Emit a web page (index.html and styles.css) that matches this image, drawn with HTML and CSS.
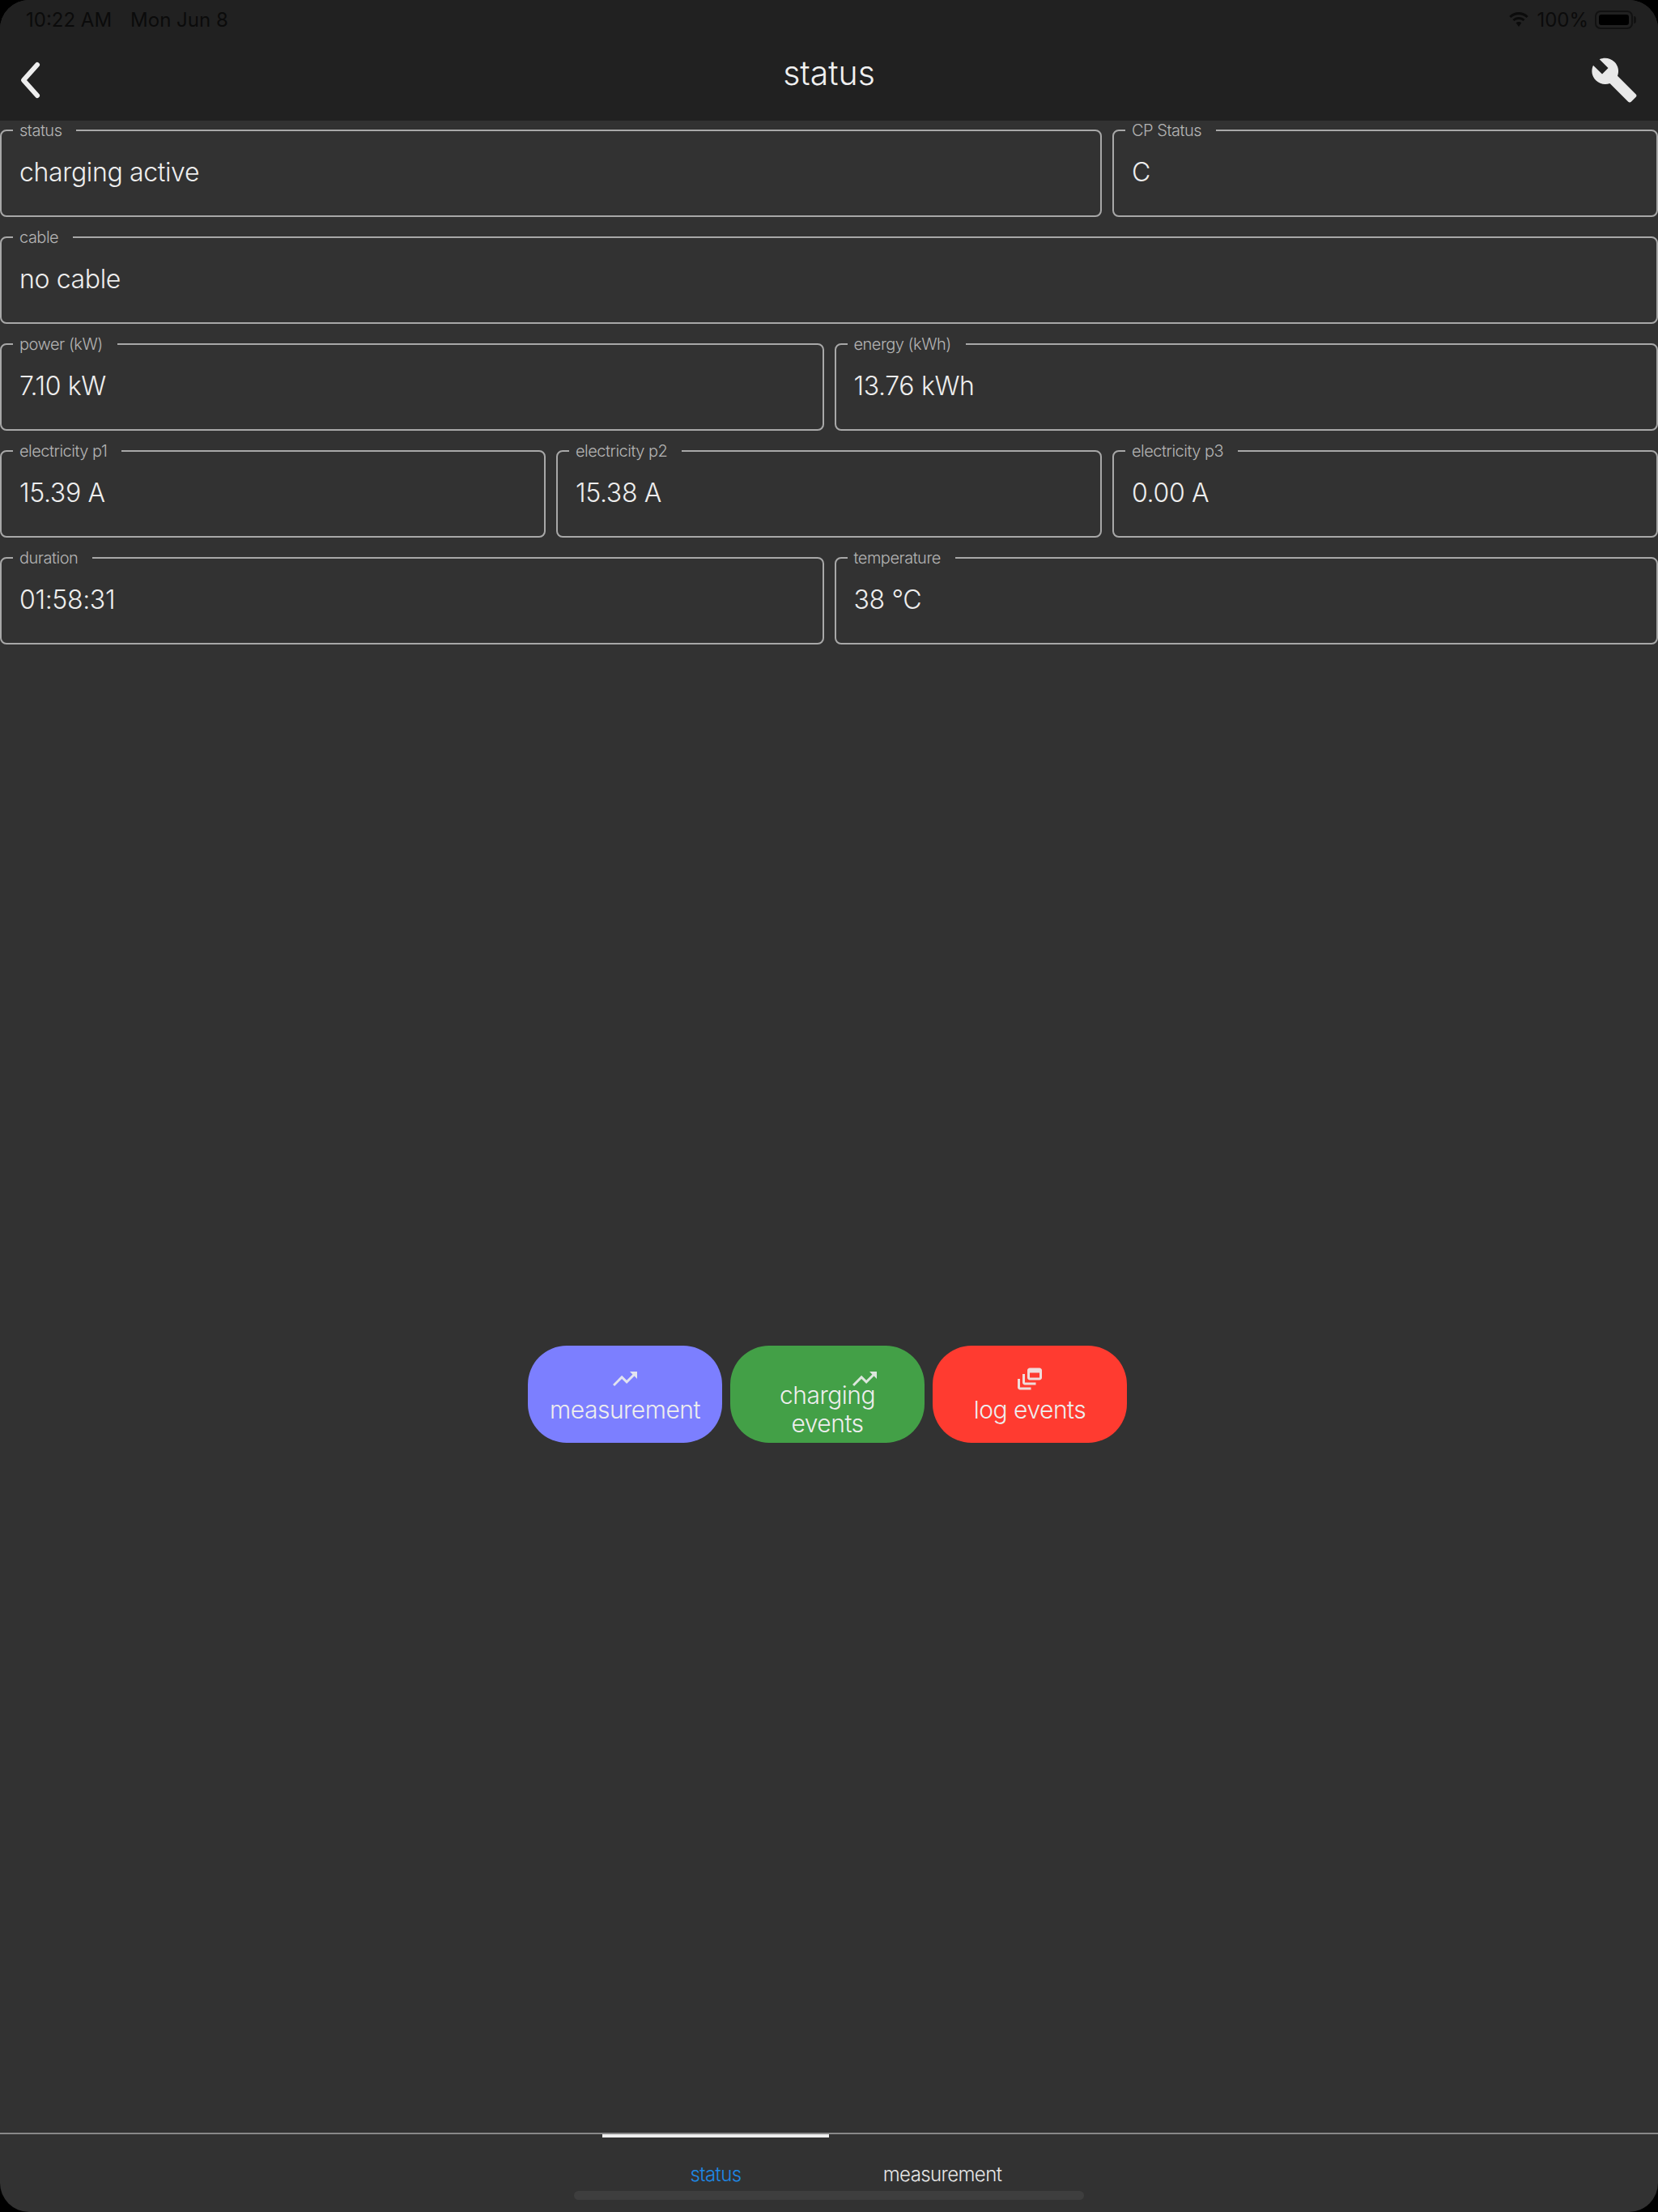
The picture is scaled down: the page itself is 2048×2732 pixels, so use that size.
FILE: index.html
```html
<!DOCTYPE html>
<html lang="en">
<head>
<meta charset="utf-8">
<title>status</title>
<link rel="stylesheet" href="styles.css">
</head>
<body>
<div class="screen">
  <header class="appbar">
    <div class="statusbar">
      <div class="status-left"><span>10:22 AM</span><span>Mon Jun 8</span></div>
      <div class="status-right">
        <svg class="wifi" viewBox="0 0 28 20"><path d="M14 4.200c3.700 0 7.100 1.400 9.700 3.800l2-2.100C22.500 2.900 18.400 1 14 1S5.500 2.900 2.300 5.900l2 2.100C6.900 5.600 10.300 4.200 14 4.200z"/><path d="M14 10c2.100 0 4 .8 5.500 2.100l2-2.100C19.500 8.100 16.900 7 14 7s-5.500 1.100-7.500 3l2 2.100C10 10.800 11.900 10 14 10z"/><path d="M14 13c-1.300 0-2.500.5-3.400 1.300L14 19l3.400-4.700C16.500 13.500 15.300 13 14 13z"/></svg>
        <span>100%</span>
        <span class="battery"><span class="battery-fill"></span></span>
      </div>
    </div>
    <div class="toolbar">
      <svg class="back" viewBox="0 0 30 50"><polyline points="24,6 7,25 24,44"/></svg>
      <h1 class="title">status</h1>
      <svg class="wrench" viewBox="0 0 24 24"><path d="M22.700 19l-9.100-9.100c.9-2.300.4-5-1.500-6.900-2-2-5-2.400-7.400-1.300L9 6 6 9 1.600 4.700C.4 7.100.9 10.100 2.900 12.100c1.900 1.900 4.600 2.400 6.900 1.500l9.100 9.100c.4.4 1 .4 1.400 0l2.300-2.300c.5-.4.5-1.100.1-1.400z"/></svg>
    </div>
  </header>

  <main class="content">
    <div class="fields">
      <fieldset class="field span-4"><legend>status</legend><div class="value">charging active</div></fieldset>
      <fieldset class="field span-2"><legend>CP Status</legend><div class="value">C</div></fieldset>
      <fieldset class="field span-6"><legend>cable</legend><div class="value">no cable</div></fieldset>
      <fieldset class="field span-3"><legend>power (kW)</legend><div class="value">7.10 kW</div></fieldset>
      <fieldset class="field span-3"><legend>energy (kWh)</legend><div class="value">13.76 kWh</div></fieldset>
      <fieldset class="field span-2"><legend>electricity p1</legend><div class="value">15.39 A</div></fieldset>
      <fieldset class="field span-2"><legend>electricity p2</legend><div class="value">15.38 A</div></fieldset>
      <fieldset class="field span-2"><legend>electricity p3</legend><div class="value">0.00 A</div></fieldset>
      <fieldset class="field span-3"><legend>duration</legend><div class="value">01:58:31</div></fieldset>
      <fieldset class="field span-3"><legend>temperature</legend><div class="value">38 °C</div></fieldset>
    </div>

    <div class="actions">
      <button class="action action-blue">
        <svg class="action-icon" viewBox="0 0 24 24"><path d="M16 6l2.290 2.290-4.880 4.880-4-4L2 16.590 3.410 18l6-6 4 4 6.300-6.290L22 12V6z"/></svg>
        <span class="action-label">measurement</span>
      </button>
      <button class="action action-green">
        <svg class="action-icon shifted" viewBox="0 0 24 24"><path d="M16 6l2.290 2.290-4.880 4.880-4-4L2 16.590 3.410 18l6-6 4 4 6.300-6.290L22 12V6z"/></svg>
        <span class="action-label">charging<br>events</span>
      </button>
      <button class="action action-red">
        <svg class="action-icon" viewBox="0 0 24 24"><path d="M8 8H6v7c0 1.100.9 2 2 2h9v-2H8V8z"/><path d="M20 3h-8c-1.100 0-2 .9-2 2v6c0 1.100.9 2 2 2h8c1.100 0 2-.9 2-2V5c0-1.100-.9-2-2-2zm0 8h-8V7h8v4z"/><path d="M4 12H2v7c0 1.100.9 2 2 2h9v-2H4v-7z"/></svg>
        <span class="action-label">log events</span>
      </button>
    </div>
  </main>

  <footer class="tabbar">
    <div class="tabs">
      <div class="tab tab-active">status</div>
      <div class="tab">measurement</div>
    </div>
    <div class="home-indicator"></div>
  </footer>
</div>
</body>
</html>
```

FILE: styles.css
```css
* { box-sizing: border-box; }

html, body {
  margin: 0;
  background: #000;
}

.screen {
  width: 2048px;
  height: 2732px;
  display: flex;
  flex-direction: column;
  background: #323232;
  border-radius: 36px;
  overflow: hidden;
  font-family: Inter, "Noto Sans", sans-serif;
  color: #eee;
}

.appbar {
  height: 149px;
  flex: none;
  background: #212121;
}

.statusbar {
  height: 48px;
  padding: 0 31px 0 32px;
  display: flex;
  align-items: center;
  justify-content: space-between;
  font-size: 24px;
  color: #0b0b0b;
}

.status-left {
  display: flex;
  gap: 23px;
}

.status-right {
  display: flex;
  align-items: center;
  gap: 8px;
}

.wifi {
  width: 28px;
  height: 20px;
  fill: #0b0b0b;
}

.battery {
  position: relative;
  width: 47px;
  height: 23px;
  padding: 3px;
  border: 2px solid #111;
  border-radius: 7px;
}

.battery::after {
  content: "";
  position: absolute;
  right: -6px;
  top: 5px;
  width: 3px;
  height: 9px;
  border-radius: 0 3px 3px 0;
  background: #111;
}

.battery-fill {
  display: block;
  height: 100%;
  border-radius: 3px;
  background: #000;
}

.toolbar {
  height: 101px;
  padding: 0 24px;
  display: grid;
  grid-template-columns: 1fr auto 1fr;
  align-items: center;
}

.back {
  width: 30px;
  height: 50px;
  margin-left: -2px;
  fill: none;
  stroke: #eee;
  stroke-width: 6;
  stroke-linecap: round;
  stroke-linejoin: round;
}

.title {
  margin: 0 0 18px;
  font-size: 41px;
  font-weight: 300;
  line-height: 48px;
  color: #f0f0f0;
}

.wrench {
  justify-self: end;
  width: 60px;
  height: 60px;
  fill: #e8e8e8;
}

.content {
  flex: 1;
  display: flex;
  flex-direction: column;
}

.fields {
  display: grid;
  grid-template-columns: repeat(6, 1fr);
  gap: 13px;
}

.span-2 { grid-column: span 2; }
.span-3 { grid-column: span 3; }
.span-4 { grid-column: span 4; }
.span-6 { grid-column: span 6; }

.field {
  min-width: 0;
  height: 119px;
  margin: 0;
  padding: 0 0 0 22px;
  border: 2px solid #a8a8a8;
  border-radius: 8px;
}

.field legend {
  margin-left: -8px;
  padding: 0 18px 0 8px;
  font-size: 20px;
  line-height: 24px;
  letter-spacing: -0.5px;
  font-weight: 300;
  color: #b4b4b4;
}

.value {
  padding-top: 20px;
  font-size: 32px;
  line-height: 40px;
  letter-spacing: -0.35px;
  font-weight: 300;
  color: #eee;
}

.actions {
  display: flex;
  justify-content: center;
  gap: 10px;
  margin-top: 866px;
  padding-right: 4px;
}

.action {
  position: relative;
  width: 240px;
  height: 120px;
  padding: 0;
  border: 0;
  border-radius: 48px;
  font: inherit;
  color: #eee;
}

.action-blue { background: #7c7fff; }
.action-green { background: #43a047; }
.action-red { background: #ff3b30; }

.action-icon {
  position: absolute;
  left: 102px;
  top: 23px;
  width: 36px;
  height: 36px;
  fill: #eee;
  opacity: 0.9;
}

.action-icon.shifted { left: 148px; }

.action-label {
  position: absolute;
  left: 0;
  right: 0;
  top: 38px;
  bottom: 0;
  display: flex;
  align-items: center;
  justify-content: center;
  font-size: 30px;
  line-height: 35px;
  letter-spacing: -0.5px;
  font-weight: 300;
  text-align: center;
}

.tabbar {
  height: 98px;
  flex: none;
  border-top: 2px solid #888;
  display: flex;
  flex-direction: column;
  align-items: center;
}

.tabs {
  display: flex;
}

.tab {
  width: 280px;
  height: 70px;
  padding-top: 33px;
  text-align: center;
  font-size: 24px;
  line-height: 34px;
  letter-spacing: -0.6px;
  font-weight: 300;
  color: #e6e6e6;
}

.tab-active {
  border-top: 4px solid #eee;
  padding-top: 29px;
  color: #1e88e5;
}

.home-indicator {
  width: 630px;
  height: 11px;
  border-radius: 6px;
  background: #3e3e3e;
}
```
